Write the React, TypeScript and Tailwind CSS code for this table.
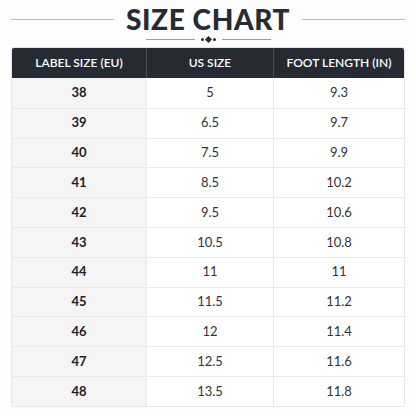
const rows = [
  ["38", "5", "9.3"],
  ["39", "6.5", "9.7"],
  ["40", "7.5", "9.9"],
  ["41", "8.5", "10.2"],
  ["42", "9.5", "10.6"],
  ["43", "10.5", "10.8"],
  ["44", "11", "11"],
  ["45", "11.5", "11.2"],
  ["46", "12", "11.4"],
  ["47", "12.5", "11.6"],
  ["48", "13.5", "11.8"],
];

export default function App() {
  return (
    <div className="w-[416px] h-[416px] bg-[#fdfdfd] px-[11px] pt-[4px] font-['Lato',sans-serif] text-[#22262d]">
      <div className="flex items-center gap-[12px]">
        <div className="h-px flex-1 bg-[#b5b7ba]" />
        <h1 className="text-[28px] leading-[31px] font-black tracking-[0.6px] text-[#272b33]">
          SIZE CHART
        </h1>
        <div className="h-px flex-1 bg-[#b5b7ba]" />
      </div>
      <div className="flex items-center justify-center h-[8px] mb-[4px]">
        <div className="h-px w-[49px] bg-[#9a9da2]" />
        <div className="flex items-center gap-[2px] mx-[6px]">
          <span className="size-[3px] rounded-full bg-[#272b33]" />
          <span className="size-[5px] rotate-45 bg-[#272b33]" />
          <span className="size-[3px] rounded-full bg-[#272b33]" />
        </div>
        <div className="h-px w-[49px] bg-[#9a9da2]" />
      </div>
      <div className="rounded-[3px] border border-[#e6e6e6] overflow-hidden">
        <div className="grid grid-cols-[134px_127px_1fr] h-[30px] bg-[#262a33] text-white text-[12px] font-semibold">
          <div className="flex items-center justify-center">LABEL SIZE (EU)</div>
          <div className="flex items-center justify-center border-l border-[#4a4e56]">US SIZE</div>
          <div className="flex items-center justify-center border-l border-[#4a4e56]">FOOT LENGTH (IN)</div>
        </div>
        {rows.map((r, i) => (
          <div
            key={r[0]}
            className={
              i === 0
                ? "grid grid-cols-[134px_127px_1fr] h-[29.8px] text-[13px]"
                : "grid grid-cols-[134px_127px_1fr] h-[29.8px] text-[13px] border-t border-[#e9e9e9]"
            }
          >
            <div className="flex items-center justify-center bg-[#f5f5f5] font-bold text-[#1e2127]">{r[0]}</div>
            <div className="flex items-center justify-center bg-white border-l border-[#e9e9e9] text-[#333]">{r[1]}</div>
            <div className="flex items-center justify-center bg-white border-l border-[#e9e9e9] text-[#333]">{r[2]}</div>
          </div>
        ))}
      </div>
    </div>
  );
}
